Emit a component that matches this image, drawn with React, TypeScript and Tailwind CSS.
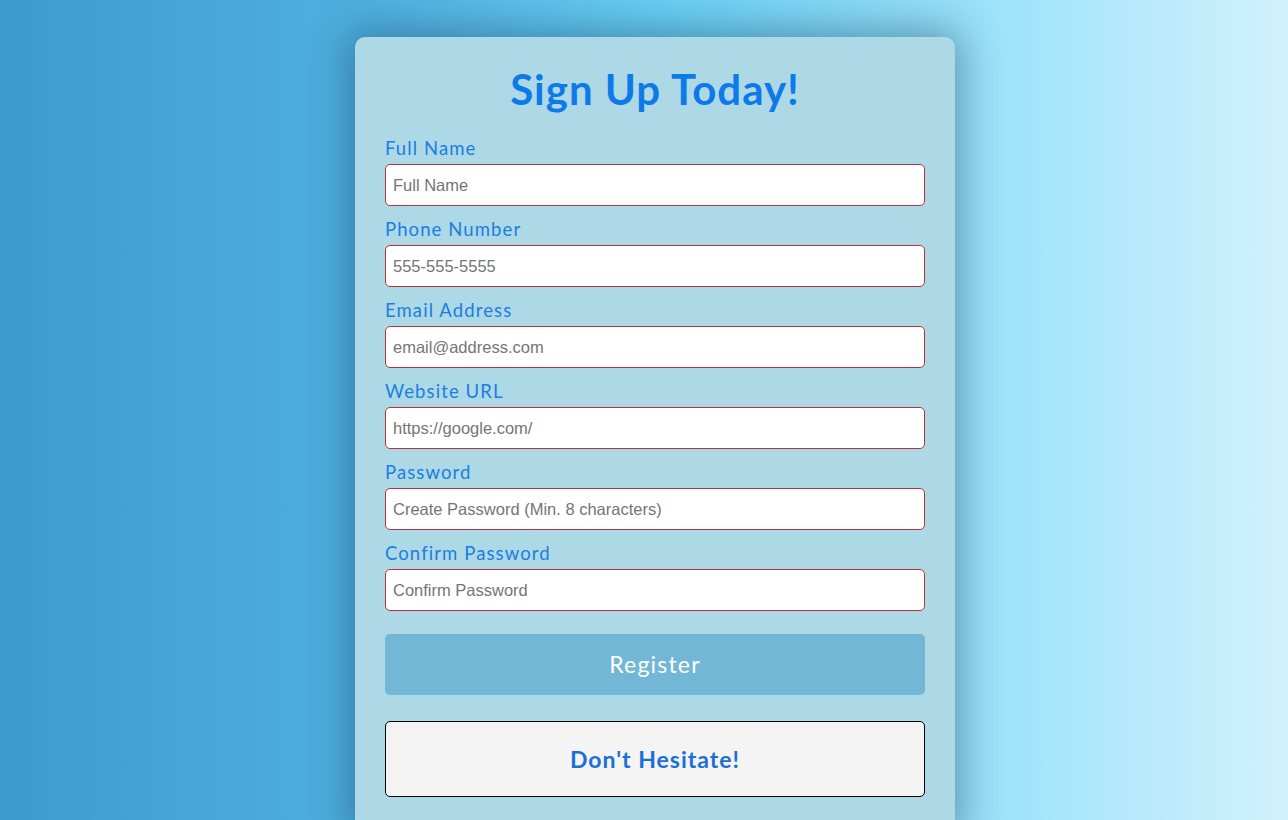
import React from "react";

const fields = [
  { label: "Full Name", placeholder: "Full Name", type: "text" },
  { label: "Phone Number", placeholder: "555-555-5555", type: "tel" },
  { label: "Email Address", placeholder: "email@address.com", type: "email" },
  { label: "Website URL", placeholder: "https://google.com/", type: "url" },
  { label: "Password", placeholder: "Create Password (Min. 8 characters)", type: "password" },
  { label: "Confirm Password", placeholder: "Confirm Password", type: "password" },
];

export default function App() {
  return (
    <div className="w-full h-[820px] overflow-hidden bg-[linear-gradient(to_right,#3f9ace_0%,#4fb0e0_28%,#6acff4_52%,#9fe3fa_78%,#d2f1fc_100%)] flex justify-center pl-[22px]">
      <div className="mt-[37px] w-[600px] h-[800px] bg-[#add8e6] rounded-[10px] shadow-[0_0_40px_6px_rgba(20,60,90,0.45)] px-[30px] pt-[26px] font-['Lato',sans-serif]">
        <h1 className="text-center text-[42px] leading-[52px] font-bold tracking-[1px] text-[#0d7ae8]">
          Sign Up Today!
        </h1>
        <form className="mt-[21px] flex flex-col gap-[11px]" onSubmit={(e) => e.preventDefault()}>
          {fields.map((f) => (
            <div key={f.label} className="flex flex-col">
              <label className="text-[18.5px] leading-[24px] text-[#1a7ee2] tracking-[1.1px] mb-[4px]">
                {f.label}
              </label>
              <input
                type={f.type}
                placeholder={f.placeholder}
                className="h-[42px] w-full bg-white border border-[#b8323a] rounded-[5px] px-[7px] text-[16.5px] font-['Liberation_Sans',sans-serif] placeholder:text-[#757575] outline-none"
              />
            </div>
          ))}
          <button
            type="submit"
            className="mt-[12px] h-[61px] w-full rounded-[5px] bg-[#72b8d6] text-white text-[23px] tracking-[1.2px]"
          >
            Register
          </button>
        </form>
        <div className="mt-[26px] h-[76px] w-full bg-[#f4f4f4] border border-black rounded-[5px] flex items-center justify-center">
          <span className="text-[23px] font-bold tracking-[1px] text-[#1b6fd9]">Don't Hesitate!</span>
        </div>
      </div>
    </div>
  );
}
